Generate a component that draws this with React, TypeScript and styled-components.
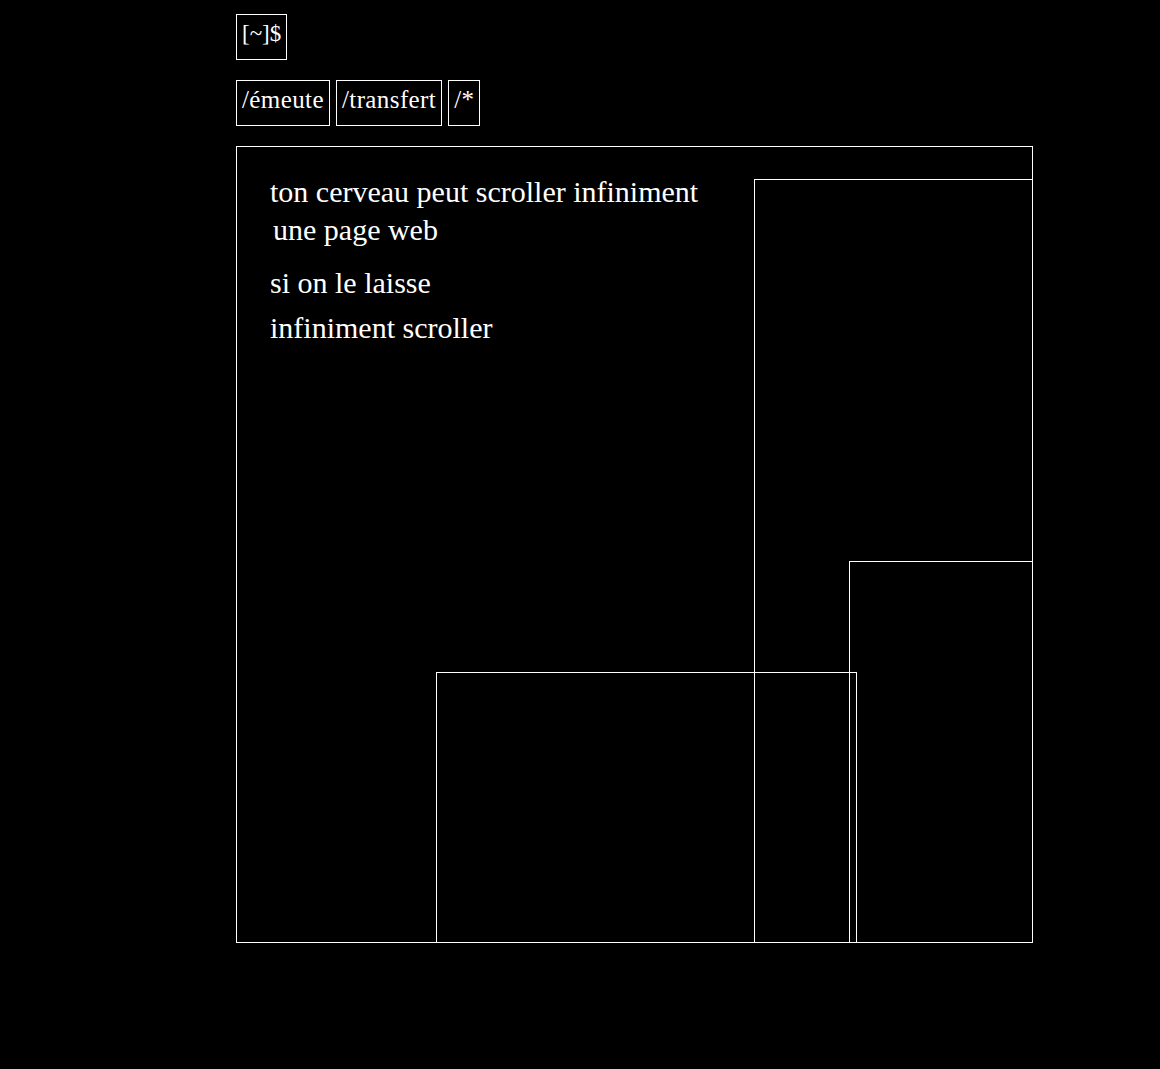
import React from "react";
import styled, { createGlobalStyle } from "styled-components";

const Global = createGlobalStyle`
  html, body {
    margin: 0;
    background: #000;
    color: #fff;
    font-family: "Liberation Serif", "DejaVu Serif", serif;
  }
`;

const Page = styled.div`
  padding: 14px 0 0 236px;
  min-height: 1069px;
  box-sizing: border-box;
`;

const Tag = styled.span<{ $size?: number; $track?: number }>`
  display: inline-block;
  border: 1px solid #fff;
  padding: 5px 5px 11px;
  font-size: ${(p) => p.$size ?? 25}px;
  letter-spacing: ${(p) => p.$track ?? 0.4}px;
  line-height: 28px;
  color: #fff;
`;

const Nav = styled.nav`
  display: flex;
  gap: 6px;
  margin-top: 20px;
`;

const Screen = styled.main`
  position: relative;
  margin-top: 20px;
  width: 797px;
  height: 797px;
  box-sizing: border-box;
  border: 1px solid #fff;
  overflow: hidden;
  padding: 26px 0 0 33px;
`;

const Line = styled.p<{ $gap?: number; $indent?: number }>`
  margin: ${(p) => p.$gap ?? 0}px 0 0 ${(p) => p.$indent ?? 0}px;
  font-size: 30px;
  line-height: 38px;
  position: relative;
  z-index: 1;
`;

const Frame = styled.div`
  position: absolute;
  border: 1px solid #fff;
  background: transparent;
`;

const frames = [
  { left: 517, top: 32, width: 500, height: 900 },
  { left: 612, top: 414, width: 400, height: 600 },
  { left: 199, top: 525, width: 419, height: 600 },
];

export default function App() {
  return (
    <>
      <Global />
      <Page>
        <Tag $size={23} $track={0}>[~]$</Tag>
        <Nav>
          <Tag>/émeute</Tag>
          <Tag>/transfert</Tag>
          <Tag>/*</Tag>
        </Nav>
        <Screen>
          <Line>ton cerveau peut scroller infiniment</Line>
          <Line $indent={3}>une page web</Line>
          <Line $gap={15}>si on le laisse</Line>
          <Line $gap={7}>infiniment scroller</Line>
          {frames.map((f, i) => (
            <Frame
              key={i}
              style={{ left: f.left, top: f.top, width: f.width, height: f.height }}
            />
          ))}
        </Screen>
      </Page>
    </>
  );
}
